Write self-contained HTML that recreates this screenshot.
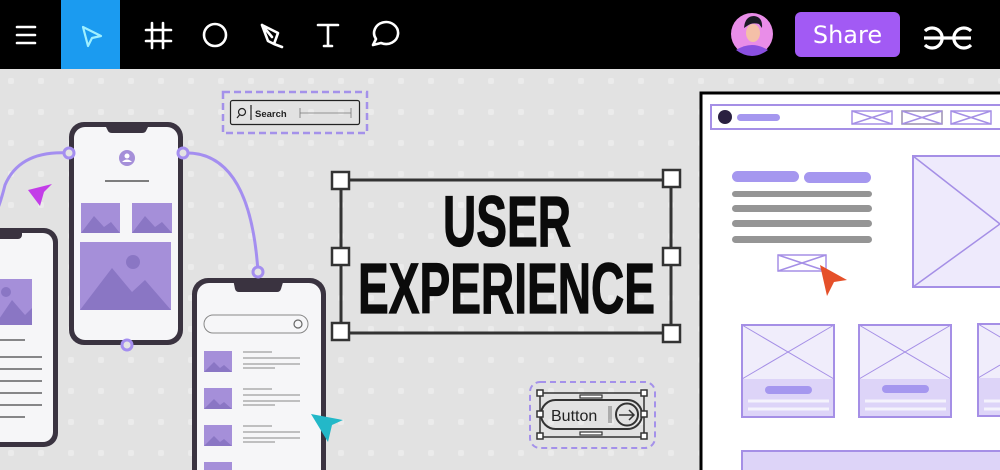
<!DOCTYPE html>
<html><head><meta charset="utf-8"><style>
html,body{margin:0;padding:0;width:1000px;height:470px;overflow:hidden;background:#e3e3e3}
svg{display:block}
</style></head><body>
<svg width="1000" height="470" viewBox="0 0 1000 470" xmlns="http://www.w3.org/2000/svg" font-family="Liberation Sans, sans-serif">
<defs>
<pattern id="dots" width="30" height="31" patternUnits="userSpaceOnUse" x="8" y="78">
<rect x="0" y="0" width="6" height="6" rx="2" fill="#ebebeb"/>
</pattern>
</defs>
<rect x="0" y="69" width="1000" height="401" fill="#e2e2e2"/>
<rect x="0" y="69" width="1000" height="401" fill="url(#dots)"/>
<!-- top bar -->
<rect x="0" y="0" width="1000" height="69" fill="#000"/>
<rect x="61" y="0" width="59" height="69" fill="#1b9bf0"/>
<g stroke="#fff" stroke-width="2.6" fill="none" stroke-linecap="round" stroke-linejoin="round">
<path d="M17 27H35M17 35H35M17 43H35"/>
<path d="M83 27L101 36L92 38L88 46Z" stroke="#9ff0ff" stroke-width="2.2"/>
<path d="M152 23V48M163 23V48M146 30H171M146 41H171"/>
<circle cx="215" cy="35" r="11"/>
<path d="M262 25L278 33L274 44L282 47M262 25L268 41L274 44M262 25L272 37"/>
<path d="M318 25H338M328 25V46M324 46H332"/>
<path d="M373 45L376 39A12 11 0 1 1 381 43Z"/>
</g>
<!-- avatar -->
<circle cx="752" cy="34" r="21" fill="#e98de8"/>
<path d="M736 50Q752 40 768 50Q760 56 752 56Q744 56 736 50Z" fill="#8a4fe0"/>
<ellipse cx="753" cy="33" rx="7" ry="9" fill="#f4c0a8"/>
<path d="M744 28Q745 16 754 16Q763 17 762 28L759 24Q752 22 747 26Z" fill="#1a1a24"/>
<!-- share -->
<rect x="795" y="12" width="105" height="45" rx="6" fill="#a25af4"/>
<text x="847.5" y="43" font-size="24" fill="#fff" text-anchor="middle" font-family="DejaVu Sans, sans-serif">Share</text>
<!-- gfg -->
<g stroke="#fff" stroke-width="3.2" fill="none">
<path d="M924 38H971"/>
<path d="M925 31A10 10 0 1 1 925 45"/>
<path d="M971 31A10 10 0 1 0 971 45"/>
</g>
<!-- curves -->
<g stroke="#a48ef0" stroke-width="3" fill="none">
<path d="M69 153Q20 150 5 185Q0 205 -5 215"/>
<path d="M183 153Q250 150 258 272"/>
</g>
<!-- phone left -->
<rect x="-20" y="228" width="78" height="219" rx="14" fill="#3a3340"/>
<rect x="-16" y="233" width="69" height="209" rx="10" fill="#f6f6f8"/>
<rect x="-16" y="229" width="38" height="10" rx="4" fill="#3a3340"/>
<rect x="-5" y="279" width="37" height="46" fill="#a58fd9"/>
<path d="M-5 325L12 300L25 315L32 308V325Z" fill="#8a76c4"/>
<circle cx="6" cy="292" r="5" fill="#8a76c4"/>
<g stroke="#444" stroke-width="1.2"><path d="M0 340H25M0 357H42M0 369H42M0 381H42M0 393H42M0 405H42M0 417H25"/></g>
<!-- phone 1 -->
<rect x="69" y="122" width="114" height="223" rx="15" fill="#3a3340"/>
<rect x="74" y="127" width="104" height="213" rx="11" fill="#f6f6f8"/>
<path d="M104 123H150L146 131Q145 133 142 133H112Q109 133 108 131Z" fill="#3a3340"/>
<circle cx="127" cy="158" r="8" fill="#a58fd9"/>
<circle cx="127" cy="156" r="2.5" fill="#fff"/><path d="M122 162Q127 157 132 162Z" fill="#fff"/>
<path d="M105 181H149" stroke="#555" stroke-width="1.5"/>
<rect x="81" y="203" width="39" height="30" fill="#a58fd9"/>
<path d="M81 233L94 216L104 227L111 222L120 233Z" fill="#8a76c4"/>
<rect x="132" y="203" width="40" height="30" fill="#a58fd9"/>
<path d="M132 233L145 216L155 227L162 222L172 233Z" fill="#8a76c4"/>
<rect x="80" y="242" width="91" height="68" fill="#a58fd9"/>
<path d="M80 310L112 268L132 292L145 280L171 310Z" fill="#8a76c4"/>
<circle cx="133" cy="262" r="7" fill="#8a76c4"/>
<circle cx="69" cy="153" r="5" fill="#e3e3e3" stroke="#a48ef0" stroke-width="3"/>
<circle cx="183" cy="153" r="5" fill="#e3e3e3" stroke="#a48ef0" stroke-width="3"/>
<circle cx="127" cy="345" r="5" fill="#e3e3e3" stroke="#a48ef0" stroke-width="3"/>
<!-- phone 3 -->
<rect x="192" y="278" width="134" height="210" rx="16" fill="#3a3340"/>
<rect x="197" y="283" width="124" height="200" rx="12" fill="#f6f6f8"/>
<path d="M233 279H284L281 289Q280 292 277 292H239Q236 292 235 289Z" fill="#3a3340"/>
<circle cx="258" cy="272" r="5" fill="#e3e3e3" stroke="#a48ef0" stroke-width="3"/>
<rect x="204" y="315" width="104" height="18" rx="9" fill="none" stroke="#888" stroke-width="1"/>
<circle cx="298" cy="324" r="4" fill="none" stroke="#666" stroke-width="1.2"/>
<g fill="#a58fd9"><rect x="204" y="351" width="28" height="21"/><rect x="204" y="388" width="28" height="21"/><rect x="204" y="425" width="28" height="21"/><rect x="204" y="462" width="28" height="10"/></g>
<g fill="#8a76c4"><path d="M204 372L214 362L220 368L224 365L232 372Z"/><path d="M204 409L214 399L220 405L224 402L232 409Z"/><path d="M204 446L214 436L220 442L224 439L232 446Z"/></g>
<g stroke="#888" stroke-width="1"><path d="M243 352H272M243 358H300M243 364H300M243 368H275M243 389H272M243 395H300M243 401H300M243 405H275M243 426H272M243 432H300M243 438H300M243 442H275"/></g>
<path d="M311 414L343 420L332 425L328 442Z" fill="#23b8c8"/>
<path d="M28 190L52 184L44 192L40 206Z" fill="#c33de8"/>
<!-- search -->
<rect x="223" y="92" width="144" height="41" fill="none" stroke="#a491ea" stroke-width="2.5" stroke-dasharray="7 4"/>
<rect x="230.5" y="100.5" width="129" height="24" rx="2" fill="none" stroke="#222" stroke-width="1.2"/>
<circle cx="242" cy="112" r="3.5" fill="none" stroke="#222" stroke-width="1.2"/><path d="M239.5 115L237 118" stroke="#222" stroke-width="1.2"/>
<path d="M251 105V120" stroke="#222" stroke-width="1.2"/>
<text x="255" y="117" font-size="9.5" fill="#222" font-weight="bold">Search</text>
<path d="M300 113H351M300 108V118M351 108V118" stroke="#777" stroke-width="0.8"/>
<!-- UX selection -->
<rect x="341" y="180" width="330" height="153" fill="none" stroke="#333" stroke-width="3"/>
<g fill="#fff" stroke="#333" stroke-width="2.5">
<rect x="332" y="172" width="17" height="17"/><rect x="663" y="170" width="17" height="17"/>
<rect x="332" y="248" width="17" height="17"/><rect x="663" y="248" width="17" height="17"/>
<rect x="332" y="323" width="17" height="17"/><rect x="663" y="325" width="17" height="17"/>
</g>
<text x="443" y="246" font-size="71" font-weight="bold" textLength="128" lengthAdjust="spacingAndGlyphs" fill="#0b0b0b" stroke="#0b0b0b" stroke-width="1.2">USER</text>
<text x="358" y="313" font-size="71" font-weight="bold" textLength="297" lengthAdjust="spacingAndGlyphs" fill="#0b0b0b" stroke="#0b0b0b" stroke-width="1.2">EXPERIENCE</text>
<!-- button -->
<rect x="530" y="382" width="125" height="66" rx="10" fill="none" stroke="#a491ea" stroke-width="2" stroke-dasharray="6 4"/>
<rect x="540" y="393" width="104" height="44" fill="none" stroke="#333" stroke-width="1.5"/>
<rect x="541" y="400" width="101" height="29" rx="14.5" fill="none" stroke="#333" stroke-width="2"/>
<text x="551" y="421" font-size="16" fill="#222">Button</text>
<path d="M609 406V423M611 406V423" stroke="#777" stroke-width="1"/>
<circle cx="627" cy="414.5" r="11" fill="none" stroke="#333" stroke-width="2"/>
<path d="M619 415H634M629 410L634 415L629 420" stroke="#333" stroke-width="1.5" fill="none"/>
<g fill="#fff" stroke="#333" stroke-width="1.2"><rect x="580" y="395" width="22" height="3"/><rect x="580" y="432" width="22" height="3"/></g>
<g fill="#fff" stroke="#333" stroke-width="1.5"><rect x="537" y="390" width="6" height="6"/><rect x="641" y="390" width="6" height="6"/><rect x="537" y="411" width="6" height="6"/><rect x="641" y="411" width="6" height="6"/><rect x="537" y="433" width="6" height="6"/><rect x="641" y="433" width="6" height="6"/></g>
<!-- wireframe -->
<rect x="701" y="93" width="310" height="390" fill="#fff" stroke="#000" stroke-width="3"/>
<rect x="711" y="105" width="300" height="24" fill="none" stroke="#a58fe6" stroke-width="2"/>
<circle cx="725" cy="117" r="7" fill="#2a2040"/>
<rect x="737" y="114" width="43" height="7" rx="3.5" fill="#a597ef"/>
<g fill="none" stroke="#a58fe6" stroke-width="1.5">
<rect x="852" y="111" width="40" height="13"/><path d="M852 111L892 124M852 124L892 111"/>
<rect x="902" y="111" width="40" height="13" stroke="#9a8fb0"/><path d="M902 111L942 124M902 124L942 111"/>
<rect x="951" y="111" width="40" height="13"/><path d="M951 111L991 124M951 124L991 111"/>
</g>
<rect x="732" y="171" width="67" height="11" rx="5.5" fill="#a597ef"/>
<rect x="804" y="172" width="67" height="11" rx="5.5" fill="#a597ef"/>
<g fill="#959595"><rect x="732" y="191" width="140" height="6" rx="3"/><rect x="732" y="205" width="140" height="7" rx="3.5"/><rect x="732" y="220" width="140" height="7" rx="3.5"/><rect x="732" y="236" width="140" height="7" rx="3.5"/></g>
<g fill="none" stroke="#a58fe6" stroke-width="1.5">
<rect x="778" y="255" width="48" height="16"/><path d="M778 255L826 271M778 271L826 255"/>
</g>
<path d="M820 265L847 280L834 282L827 296Z" fill="#e5502a"/>
<rect x="913" y="156" width="100" height="131" fill="#eeeafc" stroke="#a58fe6" stroke-width="2"/>
<path d="M913 156L1000 224L913 287" fill="none" stroke="#a58fe6" stroke-width="1.5"/>
<g>
<rect x="742" y="325" width="92" height="92" fill="#f0edfb" stroke="#a58fe6" stroke-width="2"/>
<rect x="743" y="379" width="90" height="37" fill="#ddd4f8"/>
<path d="M742 325L834 379M834 325L742 379" stroke="#a58fe6" stroke-width="1"/>
<rect x="765" y="386" width="47" height="8" rx="4" fill="#a597ef"/>
<path d="M748 401H829M748 409H829" stroke="#f4f2fc" stroke-width="3"/>
<rect x="859" y="325" width="92" height="92" fill="#f0edfb" stroke="#a58fe6" stroke-width="2"/>
<rect x="860" y="379" width="90" height="37" fill="#ddd4f8"/>
<path d="M859 325L951 379M951 325L859 379" stroke="#a58fe6" stroke-width="1"/>
<rect x="882" y="385" width="47" height="8" rx="4" fill="#a597ef"/>
<path d="M865 401H946M865 409H946" stroke="#f4f2fc" stroke-width="3"/>
<rect x="978" y="324" width="92" height="92" fill="#f0edfb" stroke="#a58fe6" stroke-width="2"/>
<rect x="979" y="378" width="90" height="37" fill="#ddd4f8"/>
<path d="M978 324L1070 378M978 378L1000 365" stroke="#a58fe6" stroke-width="1"/>
<path d="M984 401H1000M984 409H1000" stroke="#f4f2fc" stroke-width="3"/>
</g>
<rect x="742" y="451" width="280" height="30" fill="#ddd4f8" stroke="#a58fe6" stroke-width="2"/>
</svg>
</body></html>
